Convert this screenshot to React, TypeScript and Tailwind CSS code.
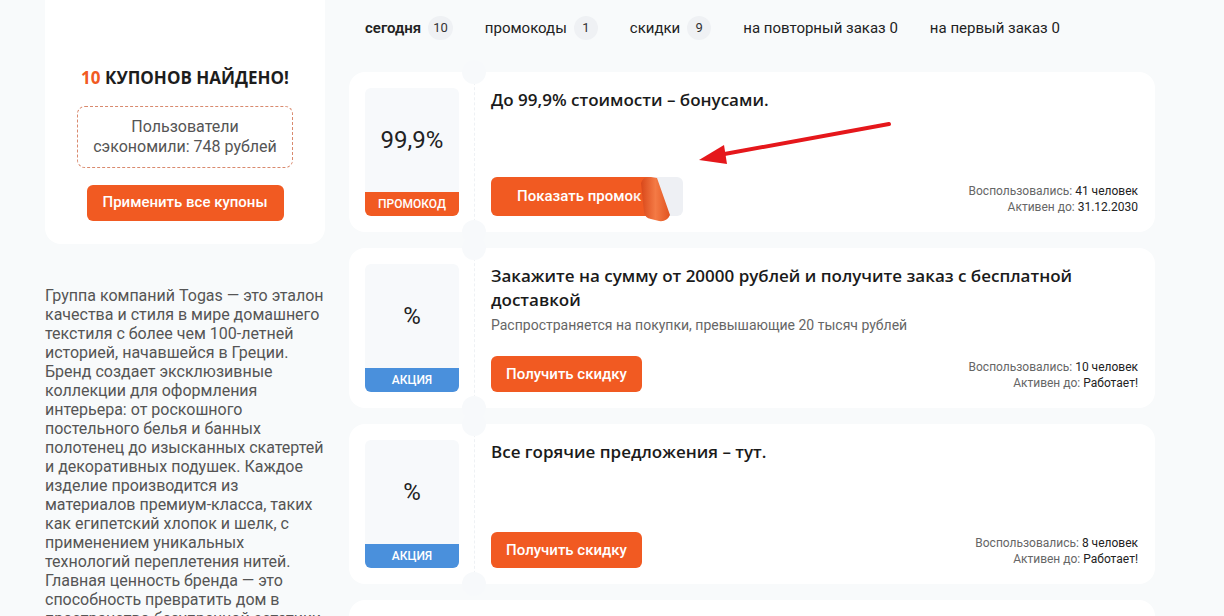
import React from "react";

type Coupon = {
  value: string;
  kind: "promo" | "sale";
  title: string;
  note?: string;
  used: string;
  until: string;
};

const coupons: Coupon[] = [
  {
    value: "99,9%",
    kind: "promo",
    title: "До 99,9% стоимости – бонусами.",
    used: "41 человек",
    until: "31.12.2030",
  },
  {
    value: "%",
    kind: "sale",
    title: "Закажите на сумму от 20000 рублей и получите заказ с бесплатной доставкой",
    note: "Распространяется на покупки, превышающие 20 тысяч рублей",
    used: "10 человек",
    until: "Работает!",
  },
  {
    value: "%",
    kind: "sale",
    title: "Все горячие предложения – тут.",
    used: "8 человек",
    until: "Работает!",
  },
];

const tabs = [
  { label: "сегодня", count: "10", active: true },
  { label: "промокоды", count: "1" },
  { label: "скидки", count: "9" },
  { label: "на повторный заказ 0" },
  { label: "на первый заказ 0" },
];

const PromoButton = () => (
  <div className="relative flex h-[39px] w-[192px] rounded-md bg-[#eef0f4]">
    <div className="flex h-full w-[158px] items-center rounded-l-md bg-[#f15a22] pl-[26px] text-[15px] font-medium text-white overflow-hidden whitespace-nowrap">
      Показать промо<span className="opacity-90">к</span>
    </div>
    <svg className="absolute left-[146px] top-[-2px]" width="36" height="48" viewBox="0 0 36 48">
      <defs>
        <linearGradient id="peel" x1="0" y1="0" x2="1" y2="0">
          <stop offset="0" stopColor="#d9481a" />
          <stop offset="0.5" stopColor="#f47a45" />
          <stop offset="1" stopColor="#e1531f" />
        </linearGradient>
      </defs>
      <path d="M4 8 Q6 1 14 2 L20 3 L33 40 Q30 47 22 46 L14 44 Q8 43 7 37 Z" fill="url(#peel)" />
    </svg>
  </div>
);

const Card = ({ c, arrow }: { c: Coupon; arrow?: boolean }) => (
  <div className="relative flex h-[160px] rounded-2xl bg-white">
    {/* stub */}
    <div className="w-[125px] shrink-0 p-4 pr-[15px]">
      <div className="flex h-full flex-col rounded-md bg-[#f7f9fb]">
        <div className="flex flex-1 items-center justify-center text-[24px] text-[#222]">
          {c.value}
        </div>
        <div
          className={
            c.kind === "promo"
              ? "flex h-6 items-center justify-center rounded-b-md bg-[#f15a22] text-[12px] font-medium text-white"
              : "flex h-6 items-center justify-center rounded-b-md bg-[#4a90dc] text-[12px] font-medium text-white"
          }
        >
          {c.kind === "promo" ? "ПРОМОКОД" : "АКЦИЯ"}
        </div>
      </div>
    </div>
    {/* notches + dashed line */}
    <div className="relative w-0 border-l border-dashed border-[#eef1f4]">
      <div className="absolute left-[-13px] top-[-12px] h-6 w-6 rounded-full bg-[#f7f9fb]" />
      <div className="absolute bottom-[-12px] left-[-13px] h-6 w-6 rounded-full bg-[#f7f9fb]" />
    </div>
    {/* body */}
    <div className="flex flex-1 flex-col pb-4 pl-[16px] pr-[17px] pt-[16px]">
      <div className="text-[17px] font-semibold leading-6 text-[#1a1a1a]" style={{ fontFamily: "'Open Sans', sans-serif" }}>
        {c.title}
      </div>
      {c.note && <div className="mt-[3px] text-[14px] text-[#666]">{c.note}</div>}
      <div className="mt-auto flex items-end justify-between">
        {c.kind === "promo" ? (
          <PromoButton />
        ) : (
          <button className="h-9 w-[151px] rounded-md bg-[#f15a22] text-[15px] font-medium text-white">Получить скидку</button>
        )}
        <div className="mb-[1px] text-right text-[12px] leading-4 text-[#666]">
          <div>
            Воспользовались: <span className="text-[#222]">{c.used}</span>
          </div>
          <div>
            Активен до: <span className="text-[#222]">{c.until}</span>
          </div>
        </div>
      </div>
    </div>
    {arrow && (
      <svg className="absolute left-[340px] top-[40px]" width="210" height="60" viewBox="0 0 210 60">
        <line x1="200" y1="12" x2="30" y2="43" stroke="#e5171b" strokeWidth="4" strokeLinecap="round" />
        <path d="M10 48 L35 33 L38 52 Z" fill="#e5171b" />
      </svg>
    )}
  </div>
);

export default function App() {
  return (
    <div className="min-h-[616px] bg-[#f8fafb] text-[#222]" style={{ fontFamily: "Roboto, sans-serif" }}>
      <div className="flex gap-6 pl-[45px]">
        {/* sidebar */}
        <aside className="w-[280px] shrink-0">
          <div className="-mt-5 rounded-2xl bg-white px-8 pb-[23px] pt-[85px]">
            <div className="text-center text-[17px] font-bold text-[#1d1d1d]" style={{ fontFamily: "'Open Sans', sans-serif" }}>
              <span className="text-[#f15a22]">10</span> КУПОНОВ НАЙДЕНО!
            </div>
            <div className="mt-[15px] rounded-lg border border-dashed border-[#d98a6e] px-3 py-[10px] text-center text-[16px] leading-5 text-[#555]">
              Пользователи сэкономили: 748 рублей
            </div>
            <div className="mt-[17px] flex justify-center">
              <button className="h-9 w-[197px] rounded-md bg-[#f15a22] text-[15px] font-medium text-white">Применить все купоны</button>
            </div>
          </div>
          <p className="mt-[42px] text-[16px] leading-[19px] text-[#555]">
            Группа компаний Togas — это эталон качества и стиля в мире домашнего текстиля с более чем 100-летней историей,
            начавшейся в Греции. Бренд создает эксклюзивные коллекции для оформления интерьера: от роскошного постельного
            белья и банных полотенец до изысканных скатертей и декоративных подушек. Каждое изделие производится из
            материалов премиум-класса, таких как египетский хлопок и шелк, с применением уникальных технологий
            переплетения нитей. Главная ценность бренда — это способность превратить дом в пространство безупречной
            эстетики и комфорта.
          </p>
        </aside>

        {/* main */}
        <main className="w-[806px]">
          <nav className="flex h-[56px] items-center gap-[32px] pl-4 text-[15px]">
            {tabs.map((t) => (
              <div key={t.label} className="flex items-center gap-[7px]">
                <span className={t.active ? "font-semibold text-[#222]" : "text-[#222]"}>{t.label}</span>
                {t.count && (
                  <span className="flex h-6 min-w-6 items-center justify-center rounded-full bg-[#eff1f4] px-[5px] text-[13px] text-[#333]">
                    {t.count}
                  </span>
                )}
              </div>
            ))}
          </nav>
          <div className="mt-4 flex flex-col gap-4">
            {coupons.map((c, i) => (
              <Card key={i} c={c} arrow={i === 0} />
            ))}
            <div className="h-[60px] rounded-2xl bg-white" />
          </div>
        </main>
      </div>
    </div>
  );
}
